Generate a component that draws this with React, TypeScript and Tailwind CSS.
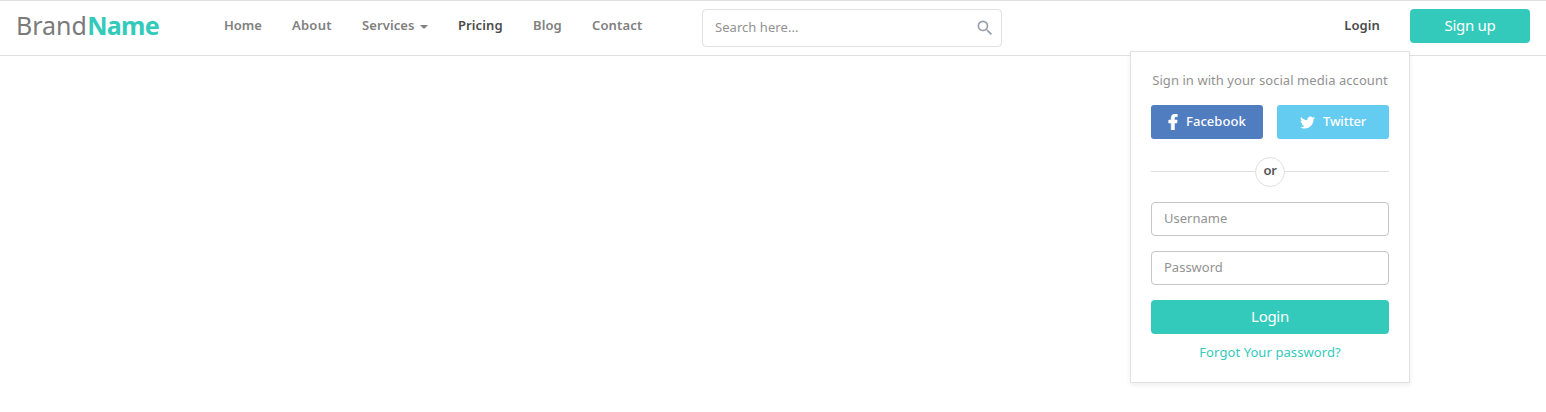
import { FaFacebookF, FaTwitter } from "react-icons/fa";
import { MdSearch } from "react-icons/md";

const links = [
  { label: "Home", style: "w-[38px] text-[#808080]" },
  { label: "About", style: "w-[40px] text-[#808080] tracking-[0.25px]" },
  { label: "Services", style: "w-[66px] text-[#808080] tracking-[0.1px]", caret: true },
  { label: "Pricing", style: "w-[45px] text-[#4a4a4a] tracking-[0.1px]" },
  { label: "Blog", style: "w-[29px] text-[#808080] tracking-[0.1px]" },
  { label: "Contact", style: "w-[51px] text-[#808080] tracking-[0.15px]" },
];

function NavLinks() {
  return (
    <nav className="ml-[65px] flex w-[478px] gap-[30px] pt-[14px] text-[13px] leading-[20px] font-semibold">
      {links.map((l) => (
        <a key={l.label} href="#" className={`flex shrink-0 items-center whitespace-nowrap ${l.style}`}>
          <span>{l.label}</span>
          {l.caret && (
            <span className="mt-[3px] ml-auto h-0 w-0 border-x-4 border-t-4 border-x-transparent border-t-[#808080]" />
          )}
        </a>
      ))}
    </nav>
  );
}

function LoginMenu() {
  return (
    <div className="absolute top-[50px] right-[136px] h-[332px] w-[280px] border border-[#e2e2e2] bg-white px-5 pt-[18px] text-[13px] shadow-[0_2px_5px_rgba(0,0,0,0.07)]">
      <p className="text-center leading-[20px] tracking-[0.06px] whitespace-nowrap text-[#929292]">
        Sign in with your social media account
      </p>
      <div className="mt-[15px] flex gap-[14px] font-medium text-white">
        <button className="flex h-[34px] w-[112px] items-center rounded-[3px] bg-[#507cc0] pl-[14px]">
          <FaFacebookF size={16} stroke="currentColor" strokeWidth={20} />
          <span className="ml-[5px] tracking-[0.05px]">Facebook</span>
        </button>
        <button className="flex h-[34px] w-[112px] items-center rounded-[3px] bg-[#64ccf1] pl-[23px]">
          <FaTwitter size={15} />
          <span className="ml-[8px] tracking-[-0.1px]">Twitter</span>
        </button>
      </div>
      <div className="mt-[18px] flex h-[30px] items-center">
        <span className="mb-px h-px flex-1 bg-[#dfdfdf]" />
        <span className="flex h-[30px] w-[30px] items-center justify-center rounded-full border border-[#dfdfdf] pb-[2px] font-semibold tracking-[-0.3px] text-[#555]">
          or
        </span>
        <span className="mb-px h-px flex-1 bg-[#dfdfdf]" />
      </div>
      <input
        placeholder="Username"
        className="mt-[15px] block h-[34px] w-full rounded-[4px] border border-[#c6c6c6] px-3 pb-[2px] outline-none placeholder:text-[#929292]"
      />
      <input
        type="password"
        placeholder="Password"
        className="mt-[15px] block h-[34px] w-full rounded-[4px] border border-[#c6c6c6] px-3 pb-[2px] outline-none placeholder:text-[#929292]"
      />
      <button className="mt-[15px] block h-[34px] w-full rounded-[4px] bg-[#33cabb] pb-px text-[15px] tracking-[-0.3px] text-white">
        Login
      </button>
      <a href="#" className="mt-[8px] block text-center leading-[20px] tracking-[0.08px] text-[#33cabb]">
        Forgot Your password?
      </a>
    </div>
  );
}

export default function App() {
  return (
    <div className="min-h-[412px] bg-white font-['Noto_Sans',sans-serif]">
      <header className="relative flex h-[56px] items-start border-y border-[#e0e0e0] pr-4 pl-4">
        <a href="#" className="flex w-[143px] pt-[6px] text-[25px] leading-[36px] whitespace-nowrap text-[#7a7a7a]">
          <span className="w-[72px]">Brand</span>
          <b className="font-bold tracking-[-0.7px] text-[#33cabb]">Name</b>
        </a>
        <NavLinks />
        <label className="mt-[8px] flex h-[38px] w-[300px] items-center rounded-[4px] border border-[#dfe0e4] pr-[6px] pl-[12px]">
          <input
            placeholder="Search here..."
            className="min-w-0 flex-1 text-[13px] tracking-[0.05px] outline-none placeholder:text-[#929292]"
          />
          <MdSearch size={20} className="text-[#96a1ad]" />
        </label>
        <a href="#" className="ml-auto pt-[14px] text-[13px] leading-[20px] font-semibold tracking-[0.1px] text-[#4a4a4a]">
          Login
        </a>
        <button className="mt-[8px] ml-[30px] h-[34px] w-[120px] rounded-[4px] bg-[#33cabb] pb-px text-[15px] tracking-[-0.3px] text-white">
          Sign up
        </button>
        <LoginMenu />
      </header>
    </div>
  );
}
